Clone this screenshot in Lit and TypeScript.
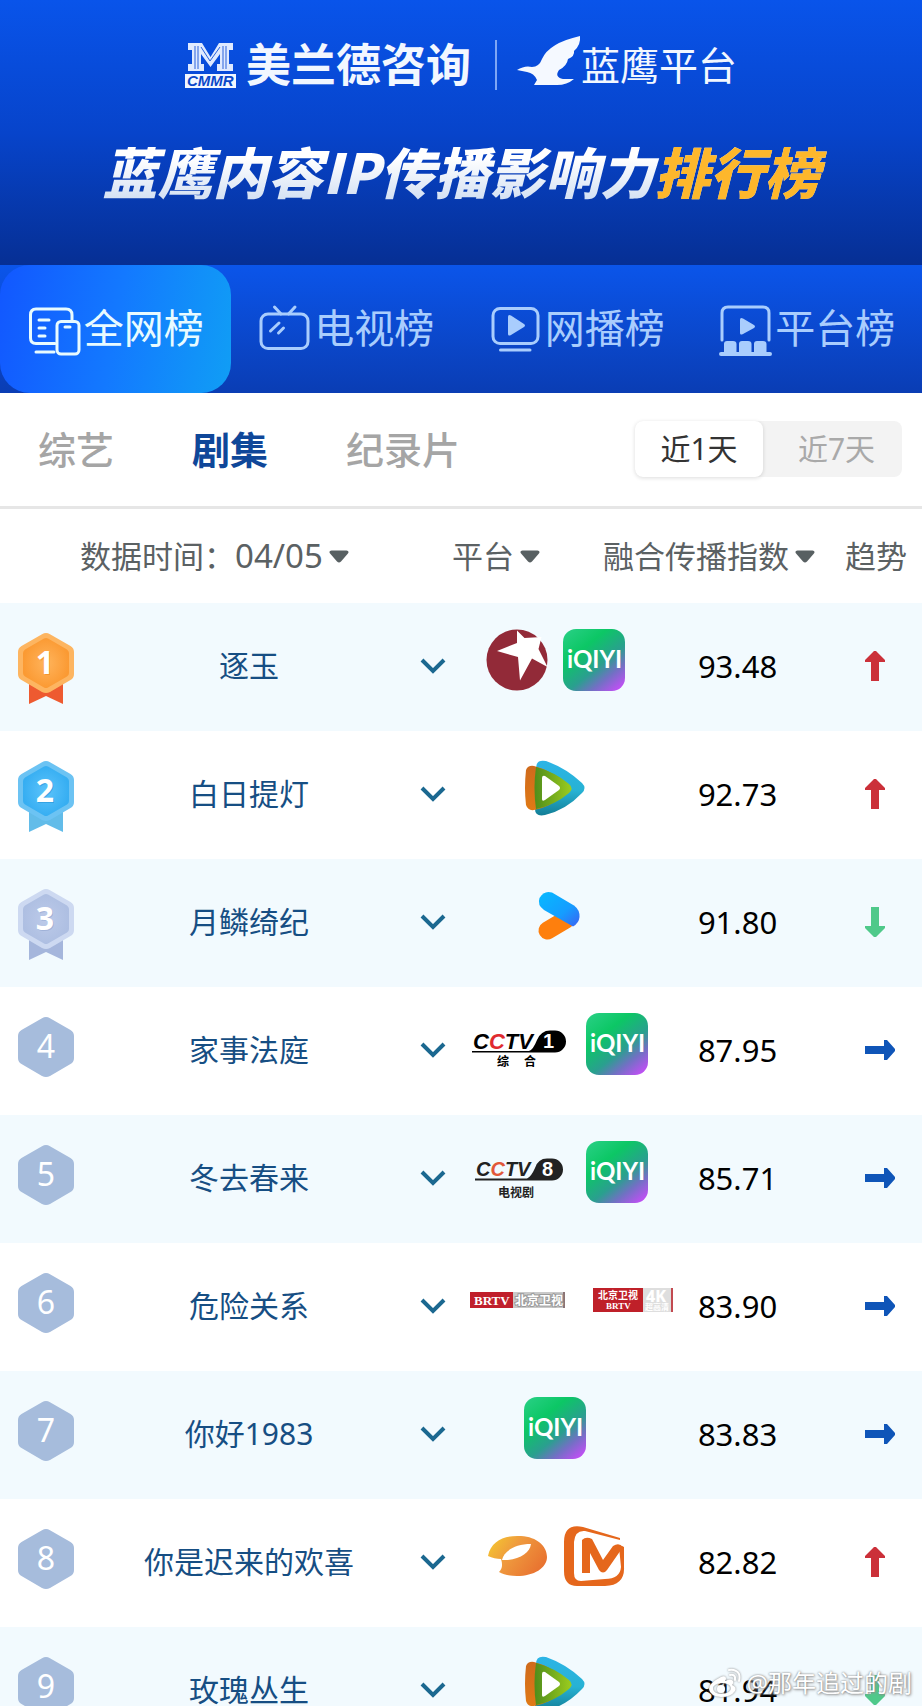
import { LitElement, html, css, svg, nothing } from "lit";
import { customElement, property, state } from "lit/decorators.js";
import { classMap } from "lit/directives/class-map.js";

type Trend = "up" | "down" | "flat";
type Logo = "dragon" | "iqiyi" | "tencent" | "youku" | "cctv1" | "cctv8" | "brtv" | "brtv4k" | "hunan" | "mango";

interface Drama {
  rank: number;
  name: string;
  logos: Logo[];
  score: string;
  trend: Trend;
}

const DRAMAS: Drama[] = [
  { rank: 1, name: "逐玉", logos: ["dragon", "iqiyi"], score: "93.48", trend: "up" },
  { rank: 2, name: "白日提灯", logos: ["tencent"], score: "92.73", trend: "up" },
  { rank: 3, name: "月鳞绮纪", logos: ["youku"], score: "91.80", trend: "down" },
  { rank: 4, name: "家事法庭", logos: ["cctv1", "iqiyi"], score: "87.95", trend: "flat" },
  { rank: 5, name: "冬去春来", logos: ["cctv8", "iqiyi"], score: "85.71", trend: "flat" },
  { rank: 6, name: "危险关系", logos: ["brtv", "brtv4k"], score: "83.90", trend: "flat" },
  { rank: 7, name: "你好1983", logos: ["iqiyi"], score: "83.83", trend: "flat" },
  { rank: 8, name: "你是迟来的欢喜", logos: ["hunan", "mango"], score: "82.82", trend: "up" },
  { rank: 9, name: "玫瑰丛生", logos: ["tencent"], score: "81.94", trend: "down" },
];

const fonts = css`"Noto Sans", "Noto Sans CJK SC", sans-serif`;

/** Rank badge: a medal with ribbon for the top three, a plain hexagon below. */
@customElement("rank-badge")
export class RankBadge extends LitElement {
  @property({ type: Number }) rank = 1;

  static styles = css`
    :host { display: block; line-height: 0; }
    .badge { width: 58px; height: 74px; }
    .digit { font-family: ${fonts}; font-size: 32px; fill: #fff; text-anchor: middle; }
    .bold { font-weight: 700; }
    .shade { opacity: 0.6; }
  `;

  render() {
    const medals = [
      { rim: "#fdb561", top: "#fb9a33", core: "#ffb45c", tail: "#ee5a30", shade: "#f08a1e" },
      { rim: "#6cc3f3", top: "#36aef2", core: "#5cc3fb", tail: "#62bce9", shade: "#2795d8" },
      { rim: "#cdd9f1", top: "#aebfe2", core: "#bccae9", tail: "#a5b6dc", shade: "#93a6d0" },
    ];
    const m = medals[this.rank - 1];
    const hexagon = "M25 2.2Q29 0 33 2.2L53.500 14Q57 16 57 20V42Q57 46 53.500 48L33 60Q29 62 25 60L4.500 48Q1 46 1 42V20Q1 16 4.500 14Z";
    if (!m) {
      return html`<svg class="badge" viewBox="0 0 58 74">
        <path d=${hexagon} fill="#a6bcdc" />
        <text class="digit" x="29" y="42">${this.rank}</text>
      </svg>`;
    }
    return html`<svg class="badge" viewBox="0 0 58 74">
      <defs>
        <radialGradient id="core"><stop offset="0" stop-color=${m.core} /><stop offset="1" stop-color=${m.top} /></radialGradient>
      </defs>
      <path d="M12 46H46V72L29 64L12 72Z" fill=${m.tail} />
      <path d=${hexagon} fill=${m.rim} />
      <path d="M27 6.500Q29 5.500 31 6.500L50 17.500Q52 19 52 21V41Q52 43.500 50 44.500L31 55.500Q29 56.500 27 55.500L8 44.500Q6 43.500 6 41V21Q6 19 8 17.500Z" fill="url(#core)" />
      <text class="digit bold shade" x="29" y="43" style="fill:${m.shade}">${this.rank}</text>
      <text class="digit bold" x="28" y="42">${this.rank}</text>
    </svg>`;
  }
}

/** Logo of a broadcasting platform. */
@customElement("platform-logo")
export class PlatformLogo extends LitElement {
  @property() name: Logo = "iqiyi";

  static styles = css`
    :host { display: block; line-height: 0; flex: none; }
    .square { width: 62px; height: 62px; }
    .wide { width: 108px; height: 62px; }
    text { font-family: "Noto Sans", "Noto Sans CJK SC", sans-serif; }
    .iqiyi { font-family: Lato, sans-serif; font-weight: 700; font-size: 24px; fill: #fff; }
    .cctv { font-family: "Liberation Sans", sans-serif; font-weight: 700; font-style: italic; font-size: 22px; }
    .cctv-small { font-size: 20px; }
    .number { font-family: "Liberation Sans", sans-serif; font-weight: 700; font-size: 20px; fill: #fff; }
    .caption { font-weight: 700; font-size: 12px; }
    .serif { font-family: "Liberation Serif", serif; font-weight: 700; font-size: 13px; fill: #fff; }
    .serif-small { font-size: 9px; }
    .station { font-weight: 700; font-size: 12px; fill: #fff; }
    .outlined { stroke: #9a9a9a; stroke-width: 2px; paint-order: stroke; }
    .station-small { font-size: 10px; }
    .four-k { font-weight: 800; font-size: 16px; fill: #fff; }
    .hd { font-weight: 700; font-size: 8px; fill: #fff; }
  `;

  private drawing() {
    switch (this.name) {
      case "dragon":
        return svg`<circle cx="31" cy="31" r="30.500" fill="#922a38" />
          <path d="M31 1.500L38.500 9L55.500 8L52.500 20L61.500 38L46 29.500L34 51.500L32 28L11 22L31 14Z" fill="#fff" />`;
      case "iqiyi":
        return svg`<defs><linearGradient id="g" x1="0.1" y1="0" x2="0.9" y2="1">
            <stop offset="0" stop-color="#26cf82" /><stop offset="0.3" stop-color="#0cc765" />
            <stop offset="0.6" stop-color="#2a9f8f" /><stop offset="0.78" stop-color="#7270c4" />
            <stop offset="1" stop-color="#c64df8" /></linearGradient></defs>
          <rect width="62" height="62" rx="13" fill="url(#g)" />
          <text class="iqiyi" x="4" y="39">iQIYI</text>`;
      case "tencent":
        return svg`<defs>
            <linearGradient id="b" x1="0" y1="0" x2="0" y2="1"><stop offset="0" stop-color="#2cb4e6" /><stop offset="0.55" stop-color="#27b2d4" /><stop offset="1" stop-color="#137e96" /></linearGradient>
            <linearGradient id="o" x1="0" y1="0" x2="0" y2="1"><stop offset="0" stop-color="#cf6a1c" /><stop offset="1" stop-color="#e07a16" /></linearGradient>
            <linearGradient id="v" x1="0" y1="0" x2="1" y2="0"><stop offset="0" stop-color="#4f8d1b" /><stop offset="1" stop-color="#9ccc1e" /></linearGradient>
          </defs>
          <path d="M12 11Q12 2 22 4Q42 11 58 26Q63 31 58 36Q42 53 21 58Q11 60 11 52Z" fill="url(#b)" />
          <path d="M2 13Q4 8 10 9Q26 13 41 26V38Q24 51 10 53Q4 54 2 48Q0 31 2 13Z" fill="url(#o)" />
          <path d="M12 10Q31 15 45 27Q50 31.500 45 36Q31 48 12 52Q9 31 12 10Z" fill="url(#v)" />
          <path d="M18 21Q18 18 21 19L35 29Q37 31 35 33L21 43Q18 45 18 42Z" fill="#fff" />`;
      case "youku":
        return svg`<defs><linearGradient id="y" x1="0" y1="0" x2="1" y2="1"><stop offset="0" stop-color="#06baff" /><stop offset="0.6" stop-color="#159dff" /><stop offset="1" stop-color="#3b62f2" /></linearGradient></defs>
          <path d="M23.500 45.500L42 34.500" stroke="#fe7f0d" stroke-width="18" stroke-linecap="round" />
          <path d="M28 7.500L50 20.500Q56 25 55.500 32Q55 38 49 41.500L20 25Q13 20 15.500 13Q20 5 28 7.500Z" fill="url(#y)" />`;
      case "cctv1":
        return svg`<text class="cctv" x="10" y="36">C<tspan fill="#e02a30">C</tspan>TV</text>
          <path d="M9 38H66Q70 37 74 27Q78 17.500 87 17.500H92A10.700 10.700 0 0 1 92 39.500H9Z" />
          <text class="number" x="80" y="35">1</text>
          <text class="caption" x="34" y="53">综</text><text class="caption" x="61" y="53">合</text>`;
      case "cctv8":
        return svg`<g fill="#222"><text class="cctv cctv-small" x="13" y="35">C<tspan fill="#e2583a">C</tspan>TV</text>
          <path d="M12 37.500H64Q68 36 72 27Q75 17.500 84 17.500H89A10.500 10.500 0 0 1 89 39.500H12Z" />
          <text class="number" x="79" y="35">8</text>
          <text class="caption" x="35" y="56">电视剧</text></g>`;
      case "brtv":
        return svg`<rect x="10" y="23" width="43" height="16" fill="#c01f2b" />
          <rect x="53" y="23" width="52" height="16" fill="#c9c9c9" />
          <rect x="103" y="23" width="2" height="16" fill="#8b7476" />
          <text class="serif" x="14" y="36">BRTV</text>
          <text class="station outlined" x="55" y="36">北京卫视</text>`;
      case "brtv4k":
        return svg`<rect x="10" y="19" width="50" height="24" fill="#bf2029" />
          <rect x="60" y="19" width="29" height="24" fill="#dedede" />
          <rect x="88" y="19" width="2" height="24" fill="#c24a50" />
          <text class="station station-small" x="15" y="30">北京卫视</text>
          <text class="serif serif-small" x="23" y="40">BRTV</text>
          <text class="four-k" x="63" y="33">4K</text><text class="hd" x="62" y="41">超高清</text>`;
      case "hunan":
        return svg`<defs><linearGradient id="h" x1="0" y1="0.200" x2="1" y2="0.700"><stop offset="0" stop-color="#f4c430" /><stop offset="0.400" stop-color="#ef9a3e" /><stop offset="1" stop-color="#e8702f" /></linearGradient></defs>
          <path d="M2 31C5 15 20 10 35 11C51 12 61 21 61 32C61 43 48 51 31 51C25 51 18 50 13 47C16 44 17 40 15 34C11 34 6 33 2 31Z" fill="url(#h)" />
          <path d="M16 35C18 26 29 19 45 19C44 28 32 36 16 35Z" fill="#fff" />`;
      case "mango":
        return svg`<path d="M57 13L20 2Q1 -2 1 17V46Q1 61 14 61H42Q62 60 61 42V22Q58 20 56 22L58 42Q57 54 42 54L18 56Q11 56 11 48V17Q12 5 22 6L57 15Z" fill="#e5671c" />
          <path d="M19 48V15Q23 11 29 14L40 35L50 21Q56 17 60 22L44 45Q40 50 36 45L27 28V48Z" fill="#e5671c" />`;
      default:
        return nothing;
    }
  }

  render() {
    const wide = ["cctv1", "cctv8", "brtv", "brtv4k"].includes(this.name);
    return html`<svg class=${wide ? "wide" : "square"} viewBox=${wide ? "0 0 108 62" : "0 0 62 62"}>${this.drawing()}</svg>`;
  }
}

@customElement("app-root")
export class AppRoot extends LitElement {
  @state() private board = 0;
  @state() private category = 1;
  @state() private range = 0;

  static styles = css`
    :host {
      display: flex;
      flex-direction: column;
      position: relative;
      height: 100vh;
      overflow: hidden;
      background: #fff;
      font-family: ${fonts};
      color: #000;
    }
    svg { display: block; flex: none; fill: none; }
    button, select {
      appearance: none;
      border: 0;
      margin: 0;
      padding: 0;
      background: none;
      font: inherit;
      color: inherit;
      cursor: pointer;
    }

    .hero {
      display: flex;
      flex-direction: column;
      align-items: center;
      gap: 48px;
      padding: 38px 0 65px;
      background: linear-gradient(#0954ea, #0744cb 50%, #062f94);
      color: #f2f7ff;
    }
    .brands { display: flex; align-items: center; height: 54px; line-height: 54px; white-space: nowrap; }
    .cmmr { width: 51px; height: 46px; margin-right: 10px; }
    .cmmr-text { font-family: "Liberation Sans", sans-serif; font-size: 15px; font-weight: 700; font-style: italic; fill: #0b48c9; }
    .company { font-size: 45px; font-weight: 700; }
    .rule { width: 2px; height: 50px; margin: 0 20px 0 24px; background: #7ea6f5; }
    .bird { width: 64px; height: 50px; margin-bottom: 8px; }
    .product { font-size: 39px; }
    .title {
      margin: 0;
      padding: 0 8px;
      font-family: "Noto Sans CJK SC", sans-serif;
      font-size: 55px;
      line-height: 60px;
      font-weight: 900;
      font-style: italic;
      white-space: nowrap;
      color: transparent;
      background: linear-gradient(#fff 30%, #d3e0f3);
      background-clip: text;
    }
    .accent { color: #fdb72c; }

    .boards {
      display: grid;
      grid-template-columns: repeat(4, 1fr);
      height: 128px;
      background: linear-gradient(#0b55ea, #0a3db4);
    }
    .board {
      display: flex;
      align-items: center;
      justify-content: center;
      gap: 3px;
      padding-bottom: 2px;
      font-size: 40px;
      line-height: 56px;
      white-space: nowrap;
      color: #a9cdfd;
    }
    .board svg { width: 54px; height: 56px; stroke: currentColor; stroke-width: 3; stroke-linecap: round; stroke-linejoin: round; }
    .board .solid { fill: currentColor; stroke: none; }
    .board.active {
      border-radius: 30px;
      background: linear-gradient(100deg, #1257ff, #1379ff 50%, #109ef5);
      color: #e8fbff;
    }

    .filters {
      display: flex;
      align-items: center;
      justify-content: space-between;
      height: 111px;
      padding: 0 20px 2px 38px;
      border-bottom: 3px solid #e6e6e6;
    }
    .categories { display: flex; gap: 78px; font-size: 38px; line-height: 56px; font-weight: 500; color: #a5a5a5; white-space: nowrap; }
    .category.active { font-weight: 700; color: #0f4799; }
    .ranges { display: flex; border-radius: 8px; background: #f3f3f3; font-size: 30px; line-height: 56px; color: #a9a9a9; }
    .range { width: 139px; padding-left: 8px; }
    .range.active { width: 128px; padding-left: 0; border-radius: 8px; background: #fff; color: #333; box-shadow: 0 1px 4px #00000024; }

    .list { flex: 1; overflow-y: auto; scrollbar-width: none; }
    table, thead, tbody { display: block; }
    th { font-weight: 400; text-align: left; }
    th, td { padding: 0; }
    .head {
      display: grid;
      grid-template-columns: 452fr 151fr 242fr 77fr;
      align-items: center;
      height: 94px;
      font-size: 31px;
      line-height: 44px;
      white-space: nowrap;
      color: #5b6163;
    }
    .date { display: flex; padding-left: 80px; }
    .date select { font-size: 33px; }
    .picker { display: inline-grid; align-items: center; justify-items: end; }
    .picker select { grid-area: 1 / 1; padding-right: 26px; line-height: 44px; }
    .picker svg { grid-area: 1 / 1; width: 20px; height: 13px; pointer-events: none; fill: #586062; }
    .row {
      display: grid;
      grid-template-columns: minmax(0, 92fr) minmax(0, 314fr) minmax(0, 54fr) minmax(0, 190fr) minmax(0, 175fr) minmax(0, 97fr);
      align-items: center;
      height: 128px;
      font-size: 30px;
      line-height: 44px;
      white-space: nowrap;
    }
    .row:nth-child(odd) { background: #f2fafe; }
    .name, .toggle, .score, .trend { padding-bottom: 2px; }
    .rank { display: flex; justify-content: center; padding-top: 4px; }
    .name { text-align: center; color: #164e83; }
    .more { display: block; margin: 0 auto; }
    .more svg { width: 26px; height: 18px; stroke: #1b6890; stroke-width: 4; }
    .logos { display: flex; justify-content: safe center; gap: 15px; padding-bottom: 14px; }
    .score { text-align: center; font-size: 31px; }
    .trend { padding-left: 40px; }
    .up { fill: #cb3039; }
    .down { fill: #4fc98a; }
    .flat { fill: #0f55b8; }

    .watermark {
      position: absolute;
      right: 10px;
      bottom: 6px;
      display: flex;
      align-items: center;
      gap: 4px;
      font-size: 24px;
      line-height: 34px;
      color: #fff;
      text-shadow: 0 0 2px #777, 1px 1px 3px #999;
      pointer-events: none;
    }
    .watermark svg { width: 34px; height: 30px; filter: drop-shadow(0 0 1px #888); }
  `;

  private boards = [
    {
      label: "全网榜",
      icon: svg`<path d="M28 43.500H9Q3.500 43.500 3.500 38V15Q3.500 9 9 9H39Q45 9 45 15V20" /><path d="M12 20H22M12 28H18M12 36H18M9 52H27M38 27H43" /><rect x="30" y="21.500" width="22" height="32.500" rx="4" />`,
    },
    {
      label: "电视榜",
      icon: svg`<rect x="4" y="14" width="47" height="34.500" rx="7" /><path d="M17.500 7L24 14M38 7L31.500 14M13.500 31L22 23M21.500 33L26.500 28" />`,
    },
    {
      label: "网播榜",
      icon: svg`<rect x="5" y="8.500" width="45" height="35" rx="7" /><path d="M12.500 50H42" /><path class="solid" d="M20 17Q20 14 23 15.500L36 24Q38 25.500 36 27L23 35Q20 36.500 20 34Z" />`,
    },
    {
      label: "平台榜",
      icon: svg`<path d="M4 40V13Q4 7 10 7H45Q51 7 51 13V40" /><path class="solid" d="M22 20Q22 17 25 18.500L36 25Q38 26.500 36 28L25 34Q22 35.500 22 33ZM6 52V44Q6 41 9 41H15Q18.500 41 18.500 44V52H21V44Q21 41 24 41H30Q33.500 41 33.500 44V52H36V44Q36 41 39 41H45Q48.500 41 48.500 44V52H52Q54 52 54 54T52 56H3Q1 56 1 54T3 52Z" />`,
    },
  ];

  private picker(id: string, label: string) {
    return html`<span class="picker">
      <select id=${id} aria-label=${label}><option>${label}</option></select>
      <svg viewBox="0 0 20 13"><path d="M2.500 0.500H17.500Q21 1 18.500 4L12 11.500Q10 13.500 8 11.500L1.500 4Q-1 1 2.500 0.500Z" /></svg>
    </span>`;
  }

  private trend(kind: Trend) {
    if (kind === "flat") {
      return html`<svg class="flat" width="30" height="20" viewBox="0 0 30 20" role="img" aria-label="持平"><path d="M0 6H19V0H22L30 9V11L22 20H19V14H0Z" /></svg>`;
    }
    return kind === "up"
      ? html`<svg class="up" width="20" height="30" viewBox="0 0 20 30" role="img" aria-label="上升"><path d="M6 30V11H0V9L9 0H11L20 9V11H14V30Z" /></svg>`
      : html`<svg class="down" width="20" height="30" viewBox="0 0 20 30" role="img" aria-label="下降"><path d="M6 0V19H0V21L9 30H11L20 21V19H14V0Z" /></svg>`;
  }

  render() {
    return html`
      <header class="hero">
        <div class="brands">
          <svg class="cmmr" viewBox="0 0 51 46">
            <path fill="#dfeaff" d="M3 1H17L25.500 15L34 1H48V8H44V22H48V29H32V22H35V12L25.500 25L16 12V22H19V29H3V22H7V8H3Z" />
            <path stroke="#2a63db" d="M10 4V27M13 4V27M38 4V27M41 4V27M16 5L25 19L35 5" />
            <rect y="32" width="51" height="14" fill="#f2f7ff" />
            <text class="cmmr-text" x="2" y="44">CMMR</text>
          </svg>
          <span class="company">美兰德咨询</span>
          <span class="rule"></span>
          <svg class="bird" viewBox="0 0 64 50">
            <path fill="#f5f9ff" d="M0 34Q8 29 15 31Q22 31 25 23Q32 7 63 0Q64 9 57 15Q58 20 51 23Q50 30 42 34Q37 41 46 43H57Q50 49 40 49H17L20 44Q17 37 10 36Z" />
          </svg>
          <span class="product">蓝鹰平台</span>
        </div>
        <h1 class="title">蓝鹰内容IP传播影响力<span class="accent">排行榜</span></h1>
      </header>

      <nav class="boards">
        ${this.boards.map(
          (b, i) => html`<button class=${classMap({ board: true, active: i === this.board })} @click=${() => (this.board = i)}>
            <svg viewBox="0 0 54 56">${b.icon}</svg><span>${b.label}</span>
          </button>`,
        )}
      </nav>

      <div class="filters">
        <div class="categories">
          ${["综艺", "剧集", "纪录片"].map(
            (c, i) => html`<button class=${classMap({ category: true, active: i === this.category })} @click=${() => (this.category = i)}>${c}</button>`,
          )}
        </div>
        <div class="ranges">
          ${["近1天", "近7天"].map(
            (r, i) => html`<button class=${classMap({ range: true, active: i === this.range })} @click=${() => (this.range = i)}>${r}</button>`,
          )}
        </div>
      </div>

      <main class="list">
        <table>
          <thead>
            <tr class="head">
              <th class="date"><label for="date">数据时间：</label>${this.picker("date", "04/05")}</th>
              <th>${this.picker("platform", "平台")}</th>
              <th>${this.picker("index", "融合传播指数")}</th>
              <th>趋势</th>
            </tr>
          </thead>
          <tbody>
            ${DRAMAS.map(
              (d) => html`<tr class="row">
                <td class="rank"><rank-badge .rank=${d.rank}></rank-badge></td>
                <td class="name">${d.name}</td>
                <td class="toggle">
                  <button class="more" aria-label="展开${d.name}">
                    <svg viewBox="0 0 26 18"><path d="M2 3L13 14L24 3" /></svg>
                  </button>
                </td>
                <td class="logos">${d.logos.map((l) => html`<platform-logo .name=${l}></platform-logo>`)}</td>
                <td class="score">${d.score}</td>
                <td class="trend">${this.trend(d.trend)}</td>
              </tr>`,
            )}
          </tbody>
        </table>
      </main>

      <div class="watermark">
        <svg viewBox="0 0 34 30">
          <path fill="#fff" fill-rule="evenodd" d="M13 9Q17 7 18 10Q18 12 17 13Q23 10 25 13Q26 15 24 17Q29 19 27 23Q23 29 13 29Q2 28 1 21Q1 15 13 9ZM13 15Q5 16 5 21Q6 26 14 26Q23 25 23 20Q22 15 13 15Z" />
          <circle cx="13" cy="21" r="4" fill="#fff" />
          <path stroke="#fff" stroke-width="2" stroke-linecap="round" d="M21 2Q28 1 31 6Q32 9 31 13M22 7Q26 6 27 9V12" />
        </svg>
        <span>@那年追过的剧</span>
      </div>
    `;
  }
}
